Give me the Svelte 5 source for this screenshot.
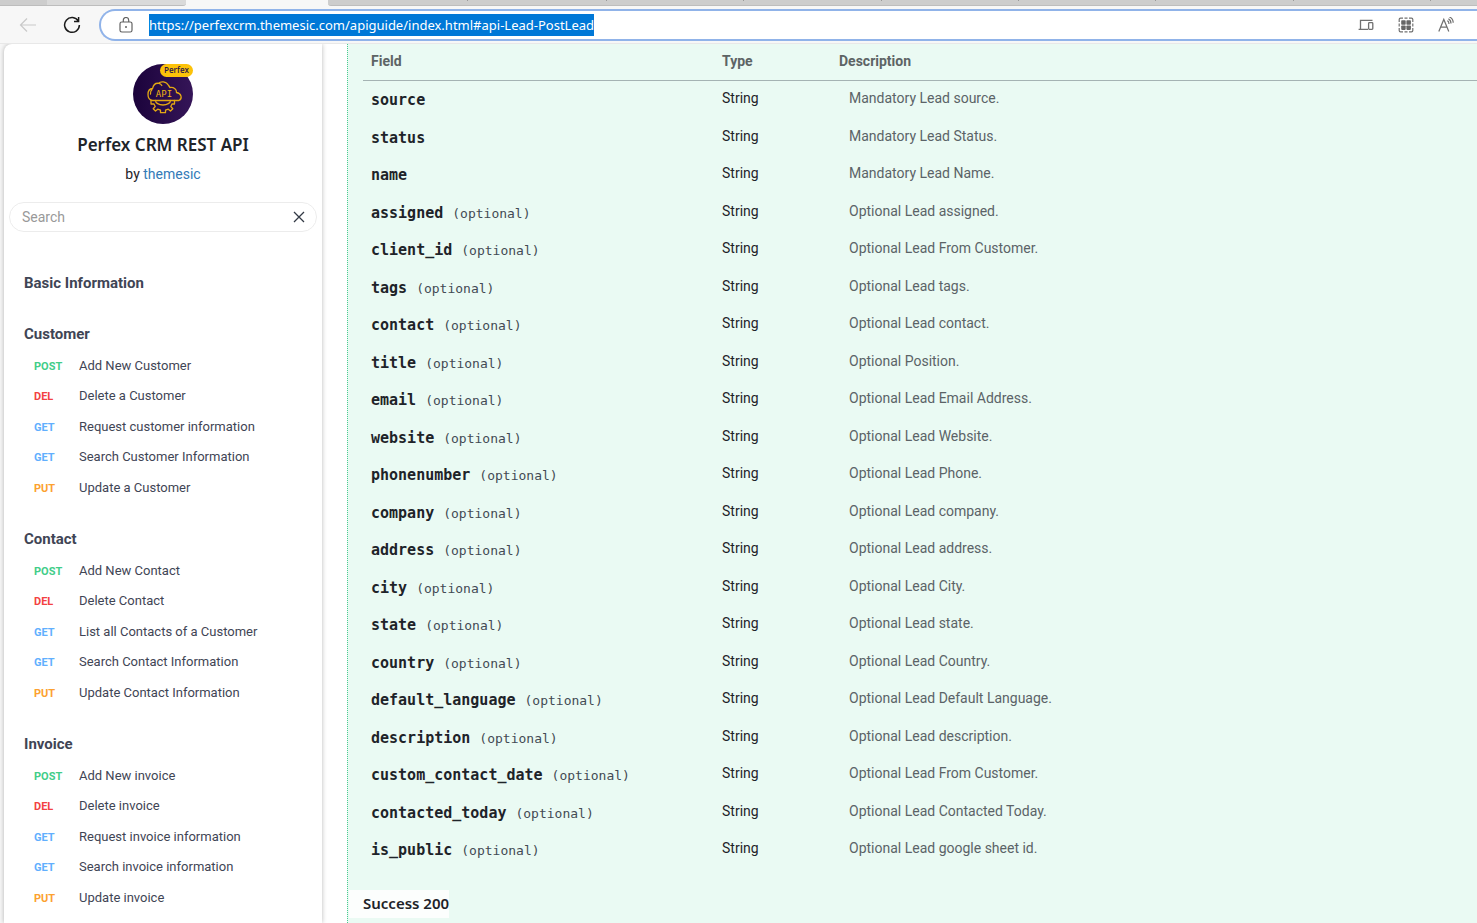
<script>
  import { onMount } from 'svelte';

  let address;
  let url = 'https://perfexcrm.themesic.com/apiguide/index.html#api-Lead-PostLead';
  let query = '';

  const tabs = [47, 139, 142, 139, 139, 137, 138, 137, 137, 138, 137, 138];

  const groups = [
    { title: 'Basic Information', items: [] },
    {
      title: 'Customer',
      items: [
        ['POST', 'Add New Customer'],
        ['DEL', 'Delete a Customer'],
        ['GET', 'Request customer information'],
        ['GET', 'Search Customer Information'],
        ['PUT', 'Update a Customer']
      ]
    },
    {
      title: 'Contact',
      items: [
        ['POST', 'Add New Contact'],
        ['DEL', 'Delete Contact'],
        ['GET', 'List all Contacts of a Customer'],
        ['GET', 'Search Contact Information'],
        ['PUT', 'Update Contact Information']
      ]
    },
    {
      title: 'Invoice',
      items: [
        ['POST', 'Add New invoice'],
        ['DEL', 'Delete invoice'],
        ['GET', 'Request invoice information'],
        ['GET', 'Search invoice information'],
        ['PUT', 'Update invoice']
      ]
    }
  ];

  const fields = [
    ['source', false, 'Mandatory Lead source.'],
    ['status', false, 'Mandatory Lead Status.'],
    ['name', false, 'Mandatory Lead Name.'],
    ['assigned', true, 'Optional Lead assigned.'],
    ['client_id', true, 'Optional Lead From Customer.'],
    ['tags', true, 'Optional Lead tags.'],
    ['contact', true, 'Optional Lead contact.'],
    ['title', true, 'Optional Position.'],
    ['email', true, 'Optional Lead Email Address.'],
    ['website', true, 'Optional Lead Website.'],
    ['phonenumber', true, 'Optional Lead Phone.'],
    ['company', true, 'Optional Lead company.'],
    ['address', true, 'Optional Lead address.'],
    ['city', true, 'Optional Lead City.'],
    ['state', true, 'Optional Lead state.'],
    ['country', true, 'Optional Lead Country.'],
    ['default_language', true, 'Optional Lead Default Language.'],
    ['description', true, 'Optional Lead description.'],
    ['custom_contact_date', true, 'Optional Lead From Customer.'],
    ['contacted_today', true, 'Optional Lead Contacted Today.'],
    ['is_public', true, 'Optional Lead google sheet id.']
  ];

  onMount(() => {
    address.focus();
    address.select();
    address.scrollLeft = 0;
  });
</script>

<div class="browser">
  <div class="tabs">
    {#each tabs as width, i}
      <span class="tab" class:hover={i === 1} class:active={i === 2} style="width: {width}px"></span>
    {/each}
  </div>

  <header class="toolbar">
    <button class="nav" aria-label="Back" disabled>
      <svg width="18" height="16" viewBox="0 0 18 16" fill="none" stroke="#c9c9c9" stroke-width="1.2"><path d="M17 8H1.5M8 1.5 1.5 8 8 14.5" /></svg>
    </button>
    <button class="nav" aria-label="Reload">
      <svg width="18" height="18" viewBox="0 0 18 18" fill="none" stroke="#1b1b1b" stroke-width="1.5"><path d="M15.4 5.2A7.4 7.4 0 1 0 16.4 9M15.6 1v4.6H11" /></svg>
    </button>
    <div class="omnibox">
      <svg class="lock" width="14" height="16" viewBox="0 0 14 16" fill="none" stroke="#626262" stroke-width="1.2"><rect x="1" y="5" width="12" height="10" rx="1.8" /><path d="M4.3 5V3.2a2.7 2.7 0 0 1 5.4 0V5" /><circle cx="7" cy="10" r="1" fill="#626262" stroke="none" /></svg>
      <input bind:this={address} bind:value={url} aria-label="Address" spellcheck="false" />
      <button aria-label="Devices">
        <svg width="16" height="16" viewBox="0 0 16 16" fill="none" stroke="#707070" stroke-width="1.3"><path d="M14.5 3.400H2.500V12M.6 12.400h9.400" /><rect x="10.600" y="5.600" width="4.200" height="6.800" rx=".8" /></svg>
      </button>
      <button aria-label="Apps">
        <svg width="16" height="16" viewBox="0 0 16 16" fill="none" stroke="#707070" stroke-width="1.2"><path d="M1.200 5V2.500q0-1.300 1.300-1.300H5M11 1.200h2.500q1.300 0 1.300 1.300V5M14.800 11v2.500q0 1.300-1.300 1.300H11M5 14.800H2.500q-1.300 0-1.300-1.300V11M6.500 1.200h3M6.500 14.800h3M1.200 6.500v3M14.800 6.500v3" /><g fill="#666" stroke="none"><rect x="3.200" y="3.200" width="4.500" height="4.500" rx=".8" /><rect x="8.400" y="3.200" width="4.500" height="4.500" rx=".8" /><rect x="3.200" y="8.400" width="4.500" height="4.500" rx=".8" /><rect x="8.400" y="8.400" width="4.500" height="4.500" rx=".8" /></g></svg>
      </button>
      <button aria-label="Read aloud">
        <svg width="16" height="16" viewBox="0 0 16 16" fill="none" stroke="#707070" stroke-width="1.2"><path d="M.8 14.5 5.8 2.4l5 12.1M2.6 10.2H9M9.4 3.6Q11 4.4 11 7M10.4 1.7Q13 3 13 6.6M11.4 0Q15.2 1.6 15.2 5.8" /></svg>
      </button>
    </div>
  </header>

  <div class="page">
    <aside>
      <div class="brand">
        <svg width="64" height="60" viewBox="0 0 64 60" role="img" aria-label="Perfex API">
          <defs><linearGradient id="disc"><stop offset="0" stop-color="#1b033b" /><stop offset="1" stop-color="#351558" /></linearGradient></defs>
          <circle cx="32" cy="30" r="30" fill="url(#disc)" />
          <g fill="none" stroke="#e3a813" stroke-width="1.3" stroke-linejoin="round" stroke-linecap="round">
            <path d="M21.500 36.500c-3-.5-4.500-3-4.500-6s1.600-5.800 4.600-6c.6-3.300 3-5.500 6-5.200 2-2.200 7.500-2.300 10 2.200.8 1 1 1.500 1.200 2 4.200-.8 7.200 2.200 6.700 5 5 1 6.200 6 2.500 8zM21 25.500q-2 2-1.500 4.500M27.600 19.300q2.200.2 3.200 2.200" />
            <path d="M24.500 36.500a7.500 4.500 0 0 0 15 0M20 36.500v3.500h3l1.200 2.500-2 2.200 2.300 2.300 2.200-1.800 2.800 1v2.500h5v-2.500l2.800-1 2.200 1.800 2.300-2.300-2-2.200 1.200-2.500h2.500v-3.500" />
          </g>
          <text x="33" y="33" text-anchor="middle" class="api">API</text>
          <rect x="29" y="0" width="33" height="13" rx="6.500" fill="#fcc209" />
          <text x="45.500" y="9" text-anchor="middle" class="tag">Perfex</text>
        </svg>
        <h1>Perfex CRM REST API</h1>
        <p>by <a href="#themesic">themesic</a></p>
      </div>

      <div class="search">
        <input bind:value={query} placeholder="Search" aria-label="Search" />
        <button aria-label="Clear search" on:click={() => (query = '')}>
          <svg width="12" height="12" viewBox="0 0 12 12" stroke="#333a45" stroke-width="1.300"><path d="m1 1 10 10M11 1 1 11" /></svg>
        </button>
      </div>

      <nav>
        {#each groups as group}
          <section>
            <h2>{group.title}</h2>
            {#if group.items.length}
              <ul>
                {#each group.items as [method, label]}
                  <li><a href="#api"><b class={method.toLowerCase()}>{method}</b><span>{label}</span></a></li>
                {/each}
              </ul>
            {/if}
          </section>
        {/each}
      </nav>
    </aside>

    <div class="content">
      <main>
        <table>
          <colgroup><col class="c-field" /><col class="c-type" /><col /></colgroup>
          <thead>
            <tr><th>Field</th><th>Type</th><th>Description</th></tr>
          </thead>
          <tbody>
            {#each fields as [name, optional, description]}
              <tr>
                <td class="field"><code>{name}</code>{#if optional}<small>(optional)</small>{/if}</td>
                <td>String</td>
                <td class="desc">{description}</td>
              </tr>
            {/each}
          </tbody>
        </table>
        <h3>Success 200</h3>
      </main>
    </div>
  </div>
</div>

<style>
  :global(body) { margin: 0; }
  .browser {
    height: 100vh;
    display: flex;
    flex-direction: column;
    overflow: hidden;
    background: #f7f7f7;
    color: #1e2329;
    font: 14px/20px Roboto, sans-serif;
  }
  .browser * { box-sizing: border-box; }
  button { padding: 0; border: 0; background: none; display: flex; align-items: center; justify-content: center; }
  a { color: inherit; text-decoration: none; }
  .tabs { display: flex; height: 6px; background: #f7f7f7; overflow: hidden; flex: none; }
  .tab { flex: none; background: #cdcdcd; border-bottom: 1px solid #bdbdbd; }
  .tab:last-child { flex: 1 0 auto; }
  .tab:nth-child(n + 5) { background: linear-gradient(#999, #999) left top / 1px 1px no-repeat #cdcdcd; }
  .tab.hover { background: #dadada; border-radius: 0 0 3px 0; }
  .tab.active { background: #f7f7f7; border-color: #f7f7f7; }
  .tab.active + .tab { border-radius: 0 0 0 3px; }
  .toolbar { display: flex; align-items: center; height: 38px; padding: 3px 0 3px 8px; flex: none; border-bottom: 1px solid #e8e8e8; }
  .nav { width: 40px; height: 32px; margin-right: 4px; }
  .omnibox {
    flex: 1;
    min-width: 0;
    display: flex;
    align-items: center;
    height: 32px;
    margin-left: 3px;
    padding: 0 21px 0 18px;
    background: #fff;
    border: 2px solid #90b3e9;
    border-right: 0;
    border-radius: 16px 0 0 16px;
  }
  .omnibox input {
    flex: 1;
    min-width: 0;
    height: 22px;
    padding: 0;
    margin-left: 16px;
    border: 0;
    outline: 0;
    background: none;
    caret-color: transparent;
    font: 13px/22px "Noto Sans", sans-serif;
    color: #222;
  }
  .omnibox input::selection { background: #0078d7; color: #fff; }
  .omnibox button { width: 20px; margin-left: 20px; }
  .lock { flex: none; }

  .page { flex: 1; min-height: 0; display: flex; padding-left: 4px; overflow: hidden; }
  aside {
    position: relative;
    width: 318px;
    flex: none;
    overflow: hidden;
    background: #fff;
    border-radius: 8px 0 0 0;
    box-shadow: 0 0 5px rgba(0, 0, 0, .28);
    z-index: 1;
  }
  .brand { display: flex; flex-direction: column; align-items: center; padding-top: 20px; }
  .api { font: 9px "DejaVu Sans Mono", monospace; fill: #f0b212; }
  .tag { font: 600 8px "Open Sans", sans-serif; fill: #2b1648; }
  h1 { margin: 8px 0 0; font: 600 17px/26px "Noto Sans", sans-serif; color: #20242a; }
  .brand p { margin: 6px 0 0; }
  .brand p a { color: #337ab7; }
  .search {
    display: flex;
    align-items: center;
    height: 30px;
    margin: 18px 5px 0;
    padding: 0 11px 0 12px;
    border: 1px solid #ececec;
    border-radius: 15px;
  }
  .search input { flex: 1; min-width: 0; padding: 0; border: 0; outline: 0; font: 14px/20px Roboto, sans-serif; background: none; }
  .search input::placeholder { color: #999; opacity: 1; }
  .search button { width: 12px; height: 20px; }
  nav { padding: 36px 20px 0; color: #3f4555; }
  h2 { margin: 0; padding: 5px 0; font: 700 15px/20px Roboto, sans-serif; }
  section { margin-bottom: 21px; }
  ul { list-style: none; margin: 2px 0 0; padding: 0 0 0 10px; }
  li { height: 30px; }
  li:nth-child(even) { height: 31px; }
  li a { display: flex; align-items: baseline; padding-top: 5px; font-size: 13px; }
  li b { width: 45px; font-size: 11px; }
  .post { color: #42cd89; }
  .del { color: #f34242; }
  .get { color: #61affe; }
  .put { color: #fca130; }

  .content { flex: 1; min-width: 0; display: flex; padding-left: 25px; background: #fff; }
  main {
    flex: 1;
    min-width: 0;
    background: #eafaf3;
    border-left: 1px dotted #49cc90;
    padding-left: 15px;
  }
  table { width: 100%; border-collapse: separate; border-spacing: 0; table-layout: fixed; }
  .c-field { width: 351px; }
  .c-type { width: 117px; }
  th { height: 37px; padding: 0 8px 2px; text-align: left; font-weight: 700; color: #5d6465; border-bottom: 1px solid #a5b3b3; }
  td { height: 37px; padding: 7px 8px 0; white-space: nowrap; vertical-align: top; }
  tr:nth-child(odd) td { height: 38px; }
  td.desc { padding-left: 18px; color: #5b6367; }
  td.field { padding-top: 9px; }
  code { font: 700 15px/20px "DejaVu Sans Mono", monospace; }
  small { margin-left: 9px; font: 13px/20px "DejaVu Sans Mono", monospace; color: #434a54; }
  h3 {
    width: max-content;
    margin: 21px 0 0 -14px;
    padding: 3px 0 5px 14px;
    background: #fcfefd;
    font: 600 15px/20px "Noto Sans", sans-serif;
  }
</style>
